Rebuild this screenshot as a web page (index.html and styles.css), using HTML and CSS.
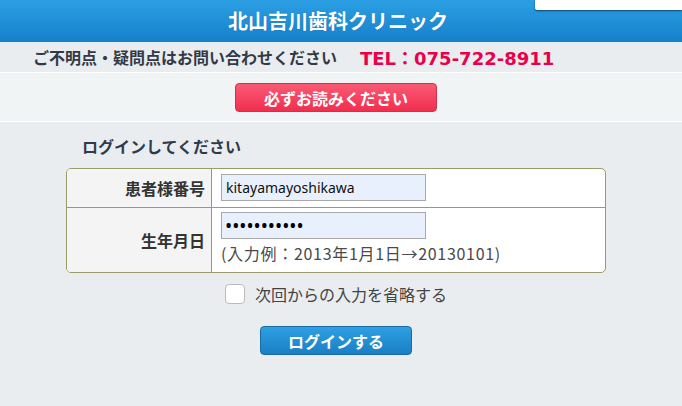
FILE: index.html
```html
<!DOCTYPE html>
<html lang="ja">
<head>
    <meta charset="UTF-8">
    <meta name="viewport" content="width=device-width, initial-scale=1.0">
    <title>北山吉川歯科クリニック ログイン</title>
    <link rel="stylesheet" href="styles.css">
</head>
<body>
    <header class="site-header">
        <h1>北山吉川歯科クリニック</h1>
        <div class="user-menu"></div>
    </header>

    <div class="contact-bar">
        <span class="contact-text">ご不明点・疑問点はお問い合わせください</span>
        <span class="contact-tel">TEL：075-722-8911</span>
    </div>

    <div class="notice-bar">
        <button class="btn-notice" type="button">必ずお読みください</button>
    </div>

    <main class="login">
        <h2 class="login-title">ログインしてください</h2>

        <form class="login-form" onsubmit="return false;">
            <div class="form-table">
                <div class="form-label">患者様番号</div>
                <div class="form-field">
                    <input class="text-input" type="text" value="kitayamayoshikawa">
                </div>
                <div class="form-label">生年月日</div>
                <div class="form-field field-birth">
                    <input class="text-input input-pass" type="password" value="12345678901">
                    <p class="hint">(入力例：2013年1月1日→20130101)</p>
                </div>
            </div>

            <label class="remember">
                <input type="checkbox" class="check">
                <span>次回からの入力を省略する</span>
            </label>

            <div class="submit-row">
                <button class="btn-login" type="submit">ログインする</button>
            </div>
        </form>
    </main>
</body>
</html>
```

FILE: styles.css
```css
body {
    margin: 0;
    padding: 0;
    font-family: "Noto Sans CJK JP", "Noto Sans", sans-serif;
    background-color: #e9edf0;
    color: #333;
    min-height: 406px;
}
.site-header {
    position: relative;
    height: 42px;
    background: linear-gradient(#2c9fe4, #1580ca);
}
.site-header h1 {
    margin: 0;
    padding-right: 6px;
    color: #fff;
    font-size: 20px;
    line-height: 42px;
    text-align: center;
    font-weight: bold;
    text-shadow: 0 0 1px rgba(0, 60, 110, 0.4);
}
.user-menu {
    position: absolute;
    top: 0;
    right: 0;
    width: 147px;
    height: 10px;
    background: #fff;
    box-shadow: 0 1px 2px rgba(0, 30, 60, 0.7);
    border-bottom-left-radius: 2px;
}
.contact-bar {
    height: 30px;
    display: flex;
    align-items: center;
    padding-left: 33px;
    border-bottom: 1px solid #fff;
}
.contact-text {
    font-size: 16px;
    font-weight: bold;
    color: #333a44;
}
.contact-tel {
    margin-left: 23px;
    font-size: 18px;
    font-weight: bold;
    color: #e8004b;
    font-family: "DejaVu Sans", "Noto Sans CJK JP", sans-serif;
}
.notice-bar {
    height: 49px;
    display: flex;
    justify-content: center;
    padding-top: 10px;
    padding-right: 10px;
    box-sizing: border-box;
    background-color: #f1f4f5;
    border-bottom: 1px solid #fff;
}
.btn-notice {
    width: 202px;
    height: 29px;
    padding: 0;
    font-family: inherit;
    font-size: 16px;
    font-weight: bold;
    color: #fff;
    background: linear-gradient(#fa5a75, #f22e4e);
    border: 1px solid #c9344c;
    border-radius: 4px;
    cursor: pointer;
}
.login {
    width: 540px;
    margin-left: 66px;
    padding-top: 13px;
}
.login-title {
    margin: 0 0 11px 16px;
    font-size: 16px;
    line-height: 22px;
    color: #2f3b4a;
}
.form-table {
    display: grid;
    grid-template-columns: 145px 1fr;
    border: 1px solid #9b9a6b;
    border-radius: 5px;
    overflow: hidden;
    background: #fff;
}
.form-label {
    display: flex;
    align-items: center;
    justify-content: flex-end;
    padding-right: 6px;
    background-color: #f4f4f4;
    border-right: 1px solid #9b9a6b;
    font-size: 16px;
    font-weight: bold;
    color: #333;
}
.form-field {
    padding: 5px 9px 6px 9px;
}
.field-birth {
    padding-top: 4px;
    padding-bottom: 8px;
}
.form-label:nth-child(1),
.form-field:nth-child(2) {
    border-bottom: 1px solid #9b9a6b;
}
.text-input {
    display: block;
    width: 205px;
    height: 27px;
    box-sizing: border-box;
    margin: 0;
    padding: 0 4px;
    border: 1px solid #a9a9a9;
    background-color: #e8f0fe;
    font-family: "Noto Sans", sans-serif;
    font-size: 14px;
    color: #111;
}
.input-pass {
    font-size: 19px;
    padding-left: 3px;
    color: #000;
}
.hint {
    margin: 3px 0 0 0;
    font-size: 16px;
    line-height: 22px;
    letter-spacing: 0.7px;
    color: #4a4a4a;
}
.remember {
    display: flex;
    justify-content: center;
    align-items: center;
    gap: 10px;
    margin-top: 11px;
    font-size: 16px;
    line-height: 20px;
    color: #444;
}
.check {
    appearance: none;
    -webkit-appearance: none;
    width: 20px;
    height: 20px;
    margin: 0;
    border: 1px solid #bbb;
    border-radius: 4px;
    background: #fff;
}
.submit-row {
    display: flex;
    justify-content: center;
    margin-top: 22px;
}
.btn-login {
    width: 152px;
    height: 29px;
    padding: 0;
    font-family: inherit;
    font-size: 16px;
    font-weight: bold;
    color: #fff;
    background: linear-gradient(#2ea0e3, #1a7fc4);
    border: 1px solid #1a6aa3;
    border-radius: 4px;
    cursor: pointer;
}
```
